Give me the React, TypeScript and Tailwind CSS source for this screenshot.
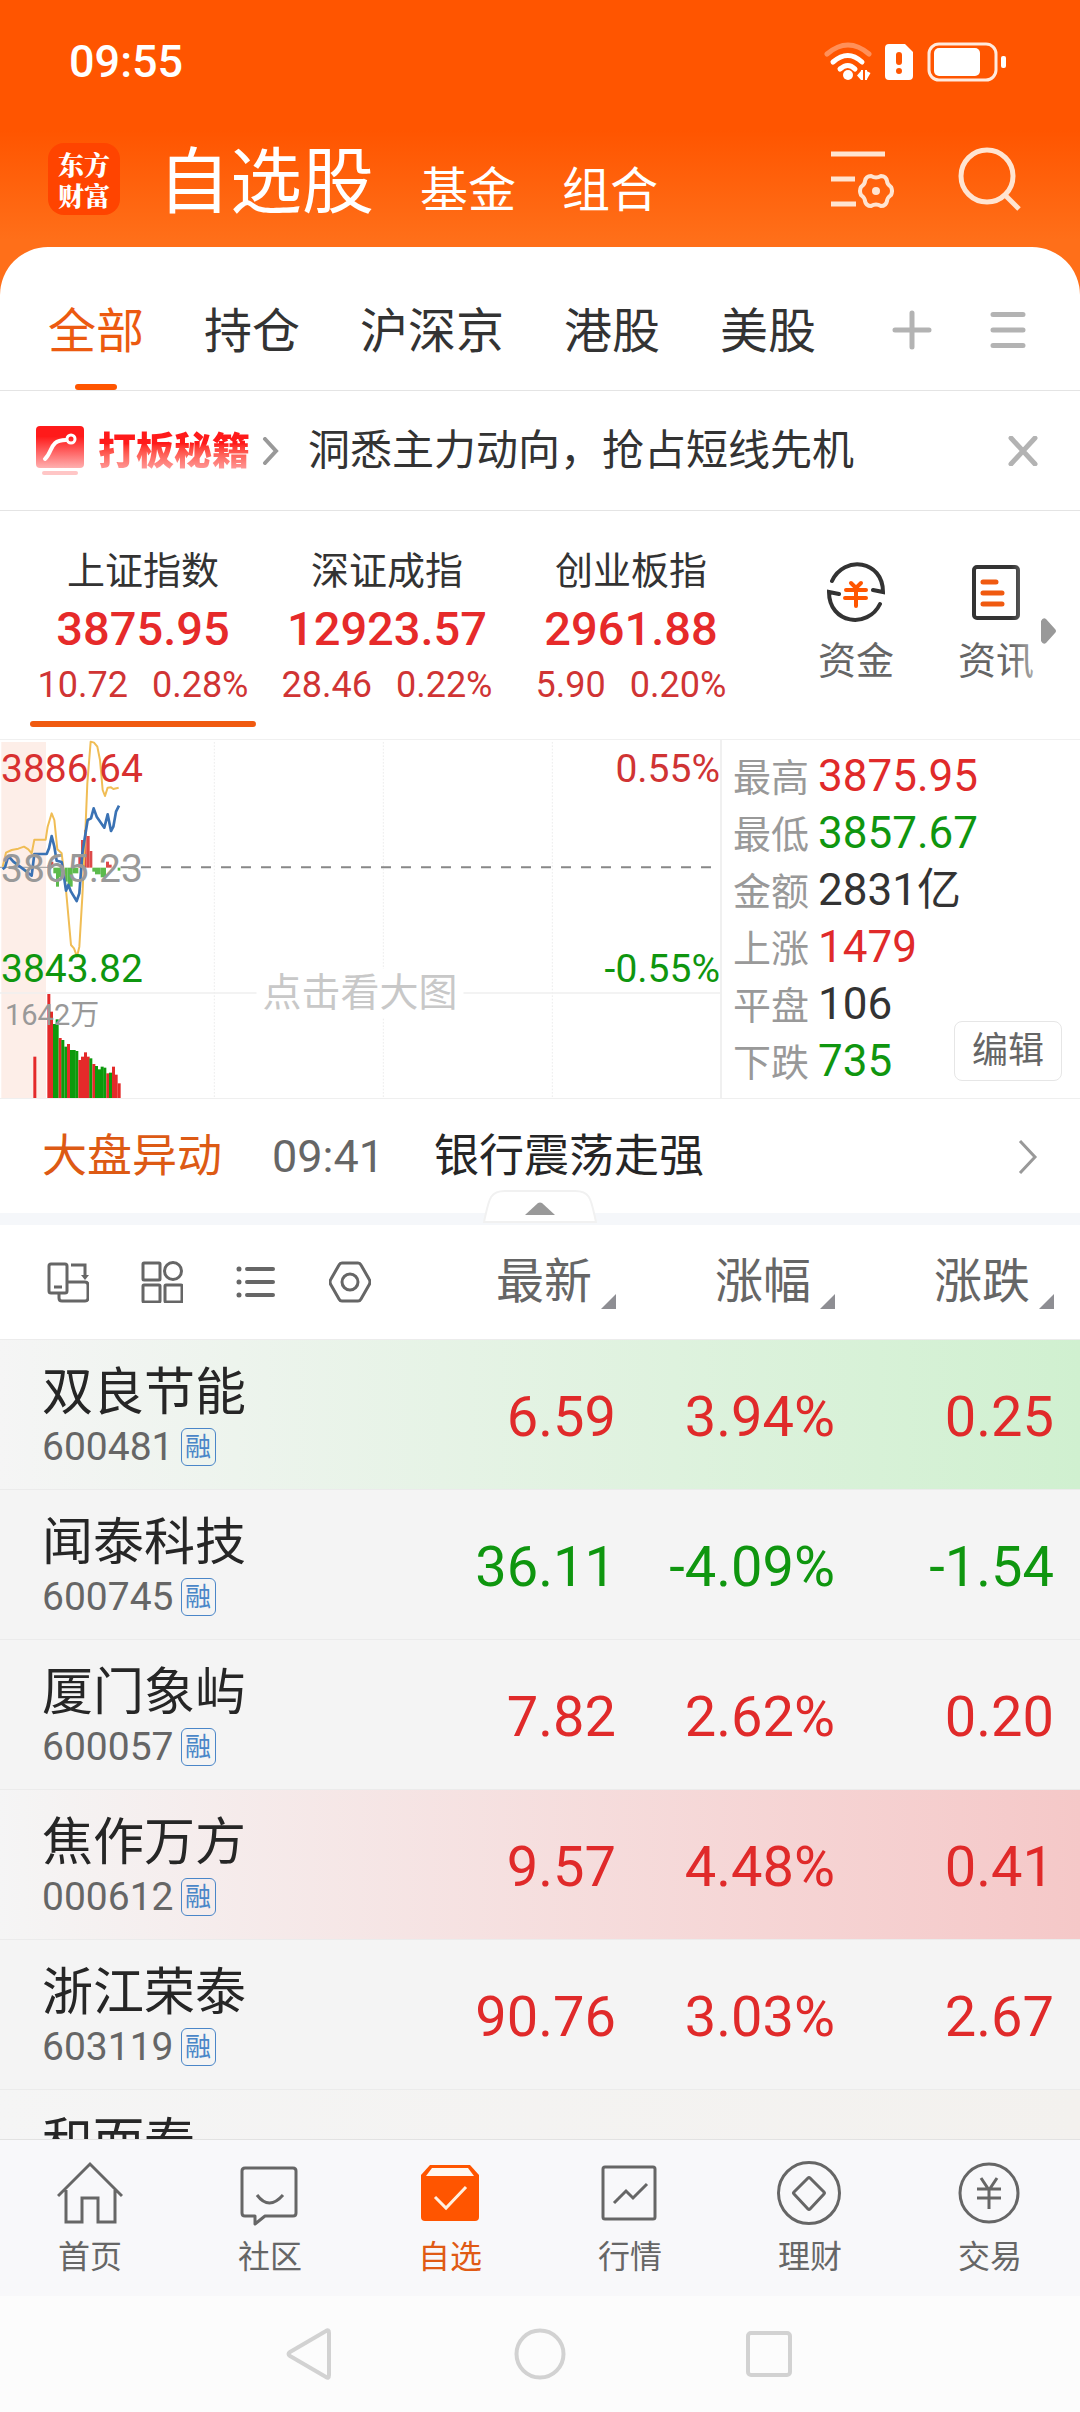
import type { ReactNode } from 'react'
import clsx from 'clsx'

const tabs = ['全部', '持仓', '沪深京', '港股', '美股']

const indices = [
    { name: '上证指数', value: '3875.95', change: '10.72', percent: '0.28%' },
    { name: '深证成指', value: '12923.57', change: '28.46', percent: '0.22%' },
    { name: '创业板指', value: '2961.88', change: '5.90', percent: '0.20%' },
]

const stats = [
    { label: '最高', value: '3875.95', color: 'text-[#e02a2a]' },
    { label: '最低', value: '3857.67', color: 'text-[#0f960f]' },
    { label: '金额', value: '2831亿', color: 'text-[#333333]' },
    { label: '上涨', value: '1479', color: 'text-[#e02a2a]' },
    { label: '平盘', value: '106', color: 'text-[#333333]' },
    { label: '下跌', value: '735', color: 'text-[#0f960f]' },
]

const columns = ['最新', '涨幅', '涨跌']

const stocks = [
    { name: '双良节能', code: '600481', price: '6.59', percent: '3.94%', change: '0.25', row: 'bg-linear-to-r from-[#f5f5f5] to-[#d0f0d0]' },
    { name: '闻泰科技', code: '600745', price: '36.11', percent: '-4.09%', change: '-1.54', row: '' },
    { name: '厦门象屿', code: '600057', price: '7.82', percent: '2.62%', change: '0.20', row: '' },
    { name: '焦作万方', code: '000612', price: '9.57', percent: '4.48%', change: '0.41', row: 'bg-linear-to-r from-[#f5f5f5] to-[#f5c8c8]' },
    { name: '浙江荣泰', code: '603119', price: '90.76', percent: '3.03%', change: '2.67', row: '' },
    { name: '和而泰', code: '002402', price: '47.90', percent: '0.34%', change: '0.16', row: 'bg-linear-to-r from-[#f5f5f5] to-[#f3f1ee]' },
]

// [x, top, rising]
const volumes: [number, number, boolean][] = [
    [100, 980, true], [142, 792, true], [150, 845, true], [159, 882, false], [167, 868, false],
    [176, 924, true], [184, 930, false], [193, 950, false], [201, 942, true], [210, 960, false],
    [218, 960, false], [226, 963, false], [235, 990, true], [243, 980, true], [252, 967, true],
    [260, 980, true], [268, 985, false], [277, 1002, true], [285, 1008, false], [294, 1018, false],
    [302, 1010, false], [310, 1013, false], [319, 1030, true], [327, 1028, false], [336, 1010, true],
    [344, 1034, true], [353, 1060, true],
]

// [x, width, end], measured from the middle line
const momentum: [number, number, number][] = [
    [143, 9, 405], [152, 8, 395], [160, 8, 430], [168, 9, 470], [177, 8, 442], [194, 9, 455],
    [203, 15, 470], [218, 17, 430], [235, 8, 372], [243, 9, 330], [252, 8, 300], [260, 9, 318],
    [269, 8, 363], [277, 8, 425], [285, 17, 433], [302, 16, 442], [318, 9, 395], [327, 8, 404],
    [353, 8, 422],
]

interface IconProps {
    size: number;
    children: ReactNode;
    className?: string;
    strokeWidth?: number;
}

function Icon({ size, children, className, strokeWidth = 3 }: IconProps) {
    return (
        <svg
            width={size}
            height={size}
            viewBox={`0 0 ${size} ${size}`}
            fill="none"
            stroke="currentColor"
            strokeWidth={strokeWidth}
            className={clsx('shrink-0', className)}
            aria-hidden="true"
        >
            {children}
        </svg>
    )
}

function StatusBar() {
    return (
        <div className="flex h-[124px] items-center justify-between pr-[73px] pl-[69px] text-white">
            <time className="text-[45px] leading-[60px] font-medium">09:55</time>
            <svg width="184" height="42" viewBox="0 0 184 42" fill="none" aria-hidden="true">
                <g stroke="#fff" strokeWidth="5" strokeLinecap="round">
                    <path d="M4 13Q25-5 46 13" opacity=".35" />
                    <path d="M10 21Q25 8 39 21" />
                    <path d="M17 28Q25 21 32 28" />
                </g>
                <circle cx="25" cy="34" r="5" fill="#fff" />
                <path d="M38 30v9l-4-4.500zM43.500 30v9l4-7z" fill="#fff" />
                <path d="M39 29v10M43 29v10" stroke="#fff" strokeWidth="2" />
                <path fillRule="evenodd" d="M66 3h16l8 8v24q0 4-4 4H66q-4 0-4-4V7q0-4 4-4zm10 8q-3 0-3 3v7q0 3 3 3t3-3v-7q0-3-3-3zm0 16a3 3 0 100 6 3 3 0 000-6z" fill="#fff" />
                <rect x="106" y="3" width="67" height="36" rx="10" stroke="#ffeadd" strokeWidth="3" />
                <rect x="111" y="7" width="46" height="28" rx="5" fill="#fff" />
                <rect x="178" y="15" width="5" height="12" rx="2" fill="#fff" />
            </svg>
        </div>
    )
}

function TitleBar() {
    return (
        <div className="flex h-[123px] items-center pr-[58px] pb-[14px] pl-[48px]">
            <div className="flex size-[72px] items-center justify-center rounded-2xl bg-[#ff4400] font-['Noto_Serif_CJK_SC','Noto_Sans_CJK_SC',serif] text-[26px] leading-[31px] font-black text-white">
                <span>东方<br />财富</span>
            </div>
            <nav className="ml-[38px] flex items-baseline gap-[46px] pt-2 text-5xl text-white">
                <a href="#watchlist" className="text-7xl leading-[80px]">自选股</a>
                <a href="#funds">基金</a>
                <a href="#portfolio">组合</a>
            </nav>
            <div className="ml-auto flex items-center gap-[64px] text-[#ffe4d1]">
                <button aria-label="列表设置">
                    <Icon size={64} strokeWidth={5}>
                        <path d="M1 7h54M1 32h24M1 57h25" />
                        <path strokeWidth="4" strokeLinejoin="round" d="M41 29q5 3 10 0 5 0 6 5 0 3 4 6 2 4 0 8-4 3-4 6-1 5-6 5-5-3-10 0-5 0-6-5 0-3-4-6-2-4 0-8 4-3 4-6 1-5 6-5z" />
                        <circle cx="46" cy="44" r="4" fill="currentColor" stroke="none" />
                    </Icon>
                </button>
                <button aria-label="搜索">
                    <Icon size={64} strokeWidth={5}>
                        <circle cx="29" cy="29" r="26" />
                        <path d="M47 48 61 62" />
                    </Icon>
                </button>
            </div>
        </div>
    )
}

function GroupTabs() {
    return (
        <nav className="flex h-[144px] items-end gap-[60px] rounded-t-[48px] border-b border-[#e4e4e4] bg-white pr-[54px] pl-[48px] text-5xl text-[#333333]">
            {tabs.map((tab, index) => (
                <button key={tab} className={clsx('relative h-[120px] pt-1 whitespace-nowrap', index === 0 && 'text-[#ec5a10]')}>
                    {tab}
                    {index === 0 && <span className="absolute bottom-0 left-1/2 h-[6px] w-[42px] -translate-x-1/2 rounded-full bg-[#ff5500]" />}
                </button>
            ))}
            <div className="ml-auto flex h-[120px] items-center gap-[58px] text-[#b3b3b3]">
                <button aria-label="添加分组">
                    <Icon size={40} strokeWidth={5}><path strokeLinecap="round" d="M20 3v34M3 20h34" /></Icon>
                </button>
                <button aria-label="分组管理">
                    <Icon size={36} strokeWidth={5}><path strokeLinecap="round" d="M3 2.500h30M3 18h30M3 33.500h30" /></Icon>
                </button>
            </div>
        </nav>
    )
}

function PromoBanner() {
    return (
        <div className="flex h-[120px] items-center border-b border-[#e4e4e4] pr-[42px] pl-[36px]">
            <svg width="48" height="50" viewBox="0 0 48 50" fill="none" aria-hidden="true">
                <defs>
                    <linearGradient id="promo" x1="0" y1="0" x2="0" y2="1">
                        <stop offset=".25" stopColor="#ff1a1a" />
                        <stop offset="1" stopColor="#ffb0b0" />
                    </linearGradient>
                </defs>
                <rect width="48" height="42" rx="4" fill="url(#promo)" />
                <rect x="6" y="45" width="36" height="4" rx="2" fill="#ffc6c6" />
                <path d="M9 33C17 26 13 14 30 14" stroke="#fff" strokeWidth="4" strokeLinecap="round" />
                <circle cx="35" cy="13" r="4" stroke="#fff" strokeWidth="3" />
            </svg>
            <a href="#tips" className="ml-[14px] flex items-center">
                <span className="bg-linear-to-b from-[#ff1a1a] from-35% to-[#ff9c9c] to-90% bg-clip-text text-[38px] leading-[48px] font-black text-transparent">打板秘籍</span>
                <svg width="18" height="28" viewBox="0 0 18 28" fill="none" stroke="#999" strokeWidth="4" strokeLinecap="round" className="ml-3" aria-hidden="true">
                    <path d="M3 2 14 14 3 26" />
                </svg>
            </a>
            <p className="ml-[28px] text-[42px] leading-[48px] text-[#333333]">洞悉主力动向，抢占短线先机</p>
            <button aria-label="关闭" className="ml-auto text-[#b3b3b3]">
                <Icon size={30} strokeWidth={5}><path strokeLinecap="round" d="M3 2 27 28M27 2 3 28" /></Icon>
            </button>
        </div>
    )
}

function IndexBar() {
    return (
        <section className="flex border-b border-[#f0f0f0]">
            <div className="grid flex-1 grid-cols-3 gap-[18px] pt-[34px] pr-[42px] pb-3 pl-[30px]">
                {indices.map((item, i) => (
                    <button key={item.name} className="flex flex-col items-center">
                        <span className="text-[38px] leading-[52px] text-[#333333]">{item.name}</span>
                        <span className="text-[47px] leading-[64px] font-medium text-[#e62a2a]">{item.value}</span>
                        <span className="flex gap-6 text-4xl leading-[48px] text-[#d03434]">
                            <span>{item.change}</span>
                            <span>{item.percent}</span>
                        </span>
                        <span className={clsx('mt-3 h-[6px] w-full rounded-full', i === 0 && 'bg-[#f05a10]')} />
                    </button>
                ))}
            </div>
            <div className="relative flex w-[294px] pt-[51px] pr-[14px]">
                <a href="#money" className="flex flex-1 flex-col items-center gap-[15px] text-[#333333]">
                    <Icon size={60} strokeWidth={4}>
                        <path strokeLinecap="round" d="M6 19C18-7 57-2 57 30L47 28M54 42C42 67 3 62 3 30l10 2" />
                        <path stroke="#ff5500" strokeLinecap="round" d="M25 21l5 5 5-5M20 28h20M19 36h21M30 27v17" />
                    </Icon>
                    <span className="text-[38px] leading-[48px] text-[#666666]">资金</span>
                </a>
                <a href="#news" className="flex flex-1 flex-col items-center gap-[15px] text-[#333333]">
                    <Icon size={60} strokeWidth={4}>
                        <rect x="8" y="5" width="44" height="51" rx="3" />
                        <path stroke="#f05a10" strokeWidth="5" strokeLinecap="round" d="M17 20h13M17 31h19M17 42h19" />
                    </Icon>
                    <span className="text-[38px] leading-[48px] text-[#666666]">资讯</span>
                </a>
                <div className="absolute top-0 right-[39px] h-full w-[30px] bg-linear-to-r from-transparent to-white/60" />
                <svg width="15" height="26" viewBox="0 0 15 26" fill="#999" className="absolute top-[107px] right-[24px]" aria-hidden="true">
                    <path d="M0 3q2-4 5-2l9 10q2 2 0 4l-9 10q-3 2-5-2z" />
                </svg>
            </div>
        </section>
    )
}

function IndexChart() {
    return (
        <div className="relative w-2/3 text-[39px] leading-[48px]">
            <svg viewBox="0 30 2160 1074" preserveAspectRatio="none" className="absolute size-full" fill="none" role="img" aria-label="上证指数分时图">
                <rect x="4" y="36" width="134" height="1068" fill="#fdeee8" />
                <path d="M643 36V1104M1150 36V1104M1657 36V1104" stroke="#ececec" strokeWidth="3" strokeDasharray="5 5" />
                <path d="M0 789H2160" stroke="#efefef" strokeWidth="5" />
                <path d="M362 412h30M423 412H2150" stroke="#888" strokeWidth="6" strokeDasharray="30 30" />
                <path d="M0 412H150" stroke="#aaa" strokeWidth="4" />
                {momentum.map(([x, width, end]) => (
                    <rect key={x} x={x} y={Math.min(end, 413)} width={width} height={Math.abs(end - 413)} fill={end < 413 ? '#dd4a4a' : '#5cbb4c'} />
                ))}
                {volumes.map(([x, top, rising]) => (
                    <rect key={x} x={x} y={top} width="9" height={1104 - top} fill={rising ? '#e42a2a' : '#0c9a0c'} />
                ))}
                <polyline stroke="#f0bd55" strokeWidth="6" strokeLinejoin="round" points="8,410 18,368 35,360 55,356 72,350 85,358 95,370 103,329 137,329 143,290 155,250 163,270 172,358 185,370 198,480 213,645 222,655 231,680 238,650 247,500 255,330 262,160 272,35 282,38 292,50 300,90 308,180 315,198 323,173 333,172 340,177 356,173" />
                <polyline stroke="#3a72b4" strokeWidth="8" strokeLinejoin="round" points="8,418 15,412 25,378 40,395 60,410 80,425 95,437 103,372 140,372 147,355 155,318 163,350 170,392 185,396 192,440 198,482 205,465 213,485 230,513 238,490 247,370 263,270 273,265 281,235 290,260 313,293 323,253 333,303 340,290 348,245 357,227" />
            </svg>
            <span className="absolute top-[5px] left-px text-[#d83030]">3886.64</span>
            <span className="absolute top-[5px] right-0 text-[#d03434]">0.55%</span>
            <span className="absolute top-[105px] left-px text-[#999999]">3865.23</span>
            <span className="absolute top-[205px] left-px text-[#0f960f]">3843.82</span>
            <span className="absolute top-[205px] right-0 text-[#0f960f]">-0.55%</span>
            <span className="absolute top-[251px] left-[5px] text-[29px] text-[#999999]">1642万</span>
            <button className="absolute top-[229px] left-1/2 -translate-x-1/2 bg-white px-[6px] whitespace-nowrap text-[#c8c8c8]">点击看大图</button>
        </div>
    )
}

function MarketOverview() {
    return (
        <section className="flex h-[359px] border-b border-[#efefef]">
            <IndexChart />
            <div className="relative w-1/3 border-l-2 border-[#f0f0f0] pt-2 pl-[11px]">
                <dl>
                    {stats.map((item) => (
                        <div key={item.label} className="flex h-[57px] items-baseline gap-[9px] leading-[56px]">
                            <dt className="text-[38px] text-[#999999]">{item.label}</dt>
                            <dd className={clsx('text-[44px]', item.color)}>{item.value}</dd>
                        </div>
                    ))}
                </dl>
                <button className="absolute right-[18px] bottom-[17px] h-[60px] w-[108px] rounded-lg border border-[#e6e6e6] bg-white text-4xl text-[#666666]">编辑</button>
            </div>
        </section>
    )
}

function MarketNews() {
    return (
        <section>
            <a href="#movement" className="flex h-[114px] items-center gap-[50px] pt-px pr-[42px] pl-[42px] text-[45px] leading-[60px]">
                <span className="text-[#dd5a14]">大盘异动</span>
                <time className="text-[#666666]">09:41</time>
                <span className="text-[#262626]">银行震荡走强</span>
                <svg width="20" height="34" viewBox="0 0 20 34" fill="none" stroke="#999" strokeWidth="3" className="ml-auto" aria-hidden="true">
                    <path d="M2 1 17 17 2 33" />
                </svg>
            </a>
            <div className="relative h-3 bg-[#f5f7fa]">
                <button aria-label="收起" className="absolute bottom-[2px] left-1/2 -translate-x-1/2">
                    <svg width="114" height="33" viewBox="0 0 114 33" fill="none" aria-hidden="true">
                        <path d="M1 32C6 10 6 1 22 1h70c16 0 16 9 21 31z" fill="#fff" stroke="#f1f1f1" strokeWidth="2" />
                        <path d="M42 25 55 13q2-1 4 0l13 12z" fill="#999" />
                    </svg>
                </button>
            </div>
        </section>
    )
}

function StockTable() {
    return (
        <div className="flex-1 overflow-hidden bg-[#f4f4f4]">
            <table className="w-full table-fixed border-separate border-spacing-0 text-right">
                <thead className="bg-white">
                    <tr className="text-[#666666]">
                        <th className="h-[115px] border-b border-[#ececec] pl-[47px]">
                            <div className="flex gap-[52px]">
                                <button aria-label="横屏">
                                    <Icon size={42}>
                                        <rect x="2" y="3" width="18" height="29" rx="2" />
                                        <path d="M7 26h8M24 4h14v12M12 32v5q0 3 3 3h23q3 0 3-3V24q0-3-3-3H20" />
                                        <path d="M34 14h8l-4 5z" fill="currentColor" stroke="none" />
                                    </Icon>
                                </button>
                                <button aria-label="宫格">
                                    <Icon size={42}>
                                        <rect x="2" y="2" width="17" height="17" rx="1" />
                                        <circle cx="32" cy="10" r="8.500" />
                                        <rect x="2" y="24" width="17" height="17" rx="1" />
                                        <rect x="24" y="24" width="17" height="17" rx="1" />
                                    </Icon>
                                </button>
                                <button aria-label="列表">
                                    <Icon size={42} strokeWidth={4}>
                                        <path strokeLinecap="round" d="M12 8h26M12 21h26M12 34h26" />
                                        <path strokeWidth="5" strokeLinecap="round" d="M4 8h0M4 21h0M4 34h0" />
                                    </Icon>
                                </button>
                                <button aria-label="设置">
                                    <Icon size={42}>
                                        <path strokeLinejoin="round" d="M13 2h16q2 0 3 2l8 14q2 3 0 6l-8 14q-1 2-3 2H13q-2 0-3-2L2 24q-2-3 0-6L10 4q1-2 3-2z" />
                                        <circle cx="21" cy="21" r="8" />
                                    </Icon>
                                </button>
                            </div>
                        </th>
                        {columns.map((column) => (
                            <th key={column} className="w-[219px] border-b border-[#ececec] font-normal last:w-[245px] last:pr-[26px]">
                                <button className="inline-flex items-end gap-[9px] align-middle text-5xl leading-[60px]">
                                    {column}
                                    <svg width="15" height="15" viewBox="0 0 15 15" fill="#8e8e93" className="mb-[3px]" aria-hidden="true">
                                        <path d="M15 0V15H0z" />
                                    </svg>
                                </button>
                            </th>
                        ))}
                    </tr>
                </thead>
                <tbody>
                    {stocks.map((stock) => {
                        const color = stock.change.startsWith('-') ? 'text-[#0f960f]' : 'text-[#e02a2a]'
                        return (
                            <tr key={stock.code} className={stock.row}>
                                <td className="h-[150px] border-b border-[#ebebeb] pt-[2px] pl-[42px] text-left">
                                    <div className="text-[51px] leading-[62px] text-[#262626]">{stock.name}</div>
                                    <div className="flex items-center gap-[7px] text-[39px] leading-[46px] text-[#666666]">
                                        {stock.code}
                                        <span className="flex h-[38px] w-[35px] items-center justify-center rounded-md border border-[#4a86c8] text-[26px] text-[#4a86c8]">融</span>
                                    </div>
                                </td>
                                {[stock.price, stock.percent, stock.change].map((value, i) => (
                                    <td key={i} className={clsx('border-b border-[#ebebeb] pt-1 text-[56px] leading-[60px] last:pr-[26px]', color)}>{value}</td>
                                ))}
                            </tr>
                        )
                    })}
                </tbody>
            </table>
        </div>
    )
}

const navItems = [
    {
        label: '首页',
        icon: <path d="M1 36 33 4 65 36M9 30v32h16V38h16v24h17V30" />,
    },
    {
        label: '社区',
        icon: (
            <>
                <path strokeLinejoin="round" d="M8 8h48q3 0 3 3v42q0 3-3 3H28l-10 8v-8H8q-3 0-3-3V11q0-3 3-3z" />
                <path strokeWidth="3" d="M20 35q12 16 26 0" />
            </>
        ),
    },
    {
        label: '自选',
        icon: (
            <>
                <path fill="#ff5500" stroke="none" d="M13 5h40l9 10v42q0 4-4 4H8q-4 0-4-4V15z" />
                <path fill="#fff8f0" stroke="none" d="M15 8h36l6 8H9z" />
                <path stroke="#fff0e0" strokeWidth="3" d="m18 37 11 11 20-21" />
            </>
        ),
    },
    {
        label: '行情',
        icon: (
            <>
                <rect x="6" y="7" width="52" height="52" rx="2" />
                <path d="m17 43 12-12 7 7 14-14" />
            </>
        ),
    },
    {
        label: '理财',
        icon: (
            <>
                <circle cx="32" cy="33" r="30.500" />
                <path strokeLinejoin="round" d="m33 18 14 14q1 1 0 2L33 49q-1 1-2 0L17 34q-1-1 0-2l14-14q1-1 2 0z" />
            </>
        ),
    },
    {
        label: '交易',
        icon: (
            <>
                <circle cx="32" cy="33" r="29" />
                <path d="m24 18 8 12 8-12M20 29h24M20 38h24M32 29v20" />
            </>
        ),
    },
]

function BottomNav() {
    return (
        <nav className="flex h-[157px] border-t border-[#e2e2e2] bg-[#f8f8fa] pt-5">
            {navItems.map((item) => (
                <a
                    key={item.label}
                    href="#"
                    className={clsx('flex flex-1 flex-col items-center gap-[11px]', item.label === '自选' ? 'text-[#e05a14]' : 'text-[#666666]')}
                >
                    <Icon size={66}>{item.icon}</Icon>
                    <span className="text-[32px] leading-[40px]">{item.label}</span>
                </a>
            ))}
        </nav>
    )
}

function SystemNav() {
    return (
        <div className="flex h-[116px] items-center justify-center gap-[174px] bg-[#fcfcfc] text-[#d2d2d2]">
            <button aria-label="返回">
                <Icon size={56} strokeWidth={4}><path strokeLinejoin="round" d="M44 5q3-2 3 2v42q0 4-3 2L8 30q-3-2 0-4z" /></Icon>
            </button>
            <button aria-label="主页">
                <Icon size={56} strokeWidth={4}><circle cx="28" cy="28" r="23.500" /></Icon>
            </button>
            <button aria-label="最近任务">
                <Icon size={56} strokeWidth={4}><rect x="6" y="7" width="42" height="42" rx="3" /></Icon>
            </button>
        </div>
    )
}

export default function App() {
    return (
        <div className="flex h-screen flex-col bg-white font-[Roboto,'Noto_Sans_CJK_SC',sans-serif]">
            <header className="bg-[linear-gradient(#ff5500_130px,#ff6f19_240px)]">
                <StatusBar />
                <TitleBar />
                <GroupTabs />
            </header>
            <PromoBanner />
            <IndexBar />
            <MarketOverview />
            <MarketNews />
            <StockTable />
            <BottomNav />
            <SystemNav />
        </div>
    )
}
